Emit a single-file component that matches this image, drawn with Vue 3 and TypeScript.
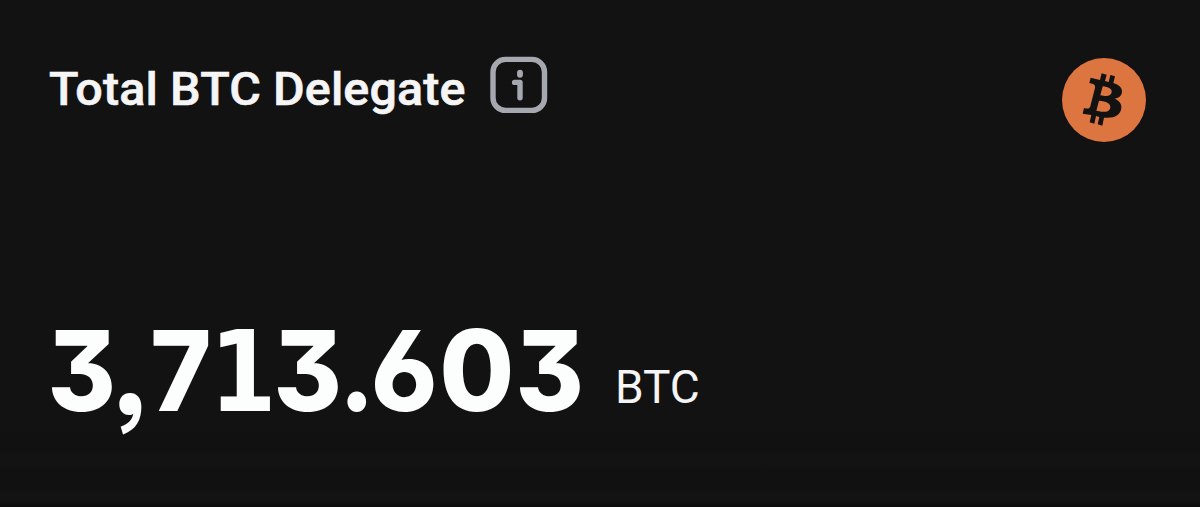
<script setup lang="ts">
interface Glyph { char: string; kind: string }

const amount = '3,713.603'
const kinds: Record<string, string> = {
  '3': 'three', ',': 'comma', '7': 'seven', '1': 'one', '.': 'dot', '6': 'six', '0': 'zero',
}
const glyphs: Glyph[] = [...amount].map((char) => ({ char, kind: kinds[char] }))
</script>

<template>
  <section class="card">
    <header class="head">
      <div class="heading">
        <h2 class="title">Total BTC Delegate</h2>
        <svg class="info" viewBox="0 0 58 58" fill="none">
          <rect x="3" y="3.4" width="51.5" height="51" rx="12.5" stroke="#a6a8b0" stroke-width="5.4" />
          <path d="M24.6 26.4H30V41.8" stroke="#a6a8b0" stroke-width="5.4" stroke-linecap="round" stroke-linejoin="round" />
          <path d="M30 16.6V18.8" stroke="#a6a8b0" stroke-width="5.8" stroke-linecap="round" />
        </svg>
      </div>
      <svg class="coin" viewBox="36 40 252 252">
        <circle cx="162" cy="166" r="126" fill="#dd7541" />
        <path
          fill="#121212" fill-rule="evenodd"
          d="M122 99L150 106L155 86L170 90L165 109L176 112L181 91L195 95L190 115C207 120 217 129 216 142C215 153 207 160 194 162C208 168 216 178 214 191C211 212 193 222 162 219L157 243L143 239L148 217L138 214L133 237L119 233L124 211L98 207L102 190C112 193 119 193 121 185L135 130C137 122 133 118 118 115ZM158 125L151 152L165 154C176 155 184 151 185 143C187 132 175 127 158 125ZM147 168L139 198L155 201C169 203 179 199 181 189C183 176 169 170 147 168Z"
        />
      </svg>
    </header>
    <div class="value">
      <div class="amount">
        <span v-for="(g, i) in glyphs" :key="i" class="cell" :class="g.kind"><span class="glyph">{{ g.char }}</span></span>
      </div>
      <span class="unit">BTC</span>
    </div>
  </section>
</template>

<style>
body { margin: 0; background: #121212; }
</style>

<style scoped>
.card {
  box-sizing: border-box;
  width: 1200px;
  height: 507px;
  padding: 56px 54px 0 50px;
  overflow: hidden;
  color: #f5f5f6;
  background: linear-gradient(#121212 0 430px, #111 434px 450px, #131313 456px 463px, #111 470px 488px, #131313 493px 501px, #0c0c0c 506px);
  font-family: Roboto, "Liberation Sans", sans-serif;
}
.head { display: flex; justify-content: space-between; height: 234px; }
.heading { display: flex; align-items: flex-start; height: 66px; }
.title {
  width: 441px;
  margin: 6px 0 0 -1.5px;
  font-size: 46px;
  line-height: 54px;
  font-weight: 500;
  letter-spacing: 0.1px;
  white-space: nowrap;
  transform: scaleX(1.054);
  transform-origin: left;
  -webkit-text-stroke: 0.6px #f5f5f6;
}
.info { width: 58px; height: 58px; }
.coin { width: 84px; height: 84px; margin-top: 2px; }
.value { display: flex; align-items: flex-start; margin-left: -3px; }
.amount {
  display: flex;
  color: #fcfdfd;
  font: 800 112px/160px Inter, sans-serif;
  font-feature-settings: "cv09" 1, "cv03" 1, "ss03" 1;
}
.cell { display: flex; justify-content: center; }
.glyph { display: block; }
.three { width: 69px; }
.three .glyph { transform: scaleX(0.93); }
.comma { width: 32.5px; }
.comma .glyph { transform: scaleY(1.1); transform-origin: 50% 88px; }
.seven { width: 64.5px; }
.seven .glyph { transform: scaleX(0.93); }
.one { width: 60.5px; font-family: "DejaVu Sans"; font-weight: 700; }
.one .glyph { transform: translateY(1.5px) scaleX(0.86); }
.dot { width: 28px; }
.dot .glyph { transform: scaleX(0.9); }
.six { width: 68px; }
.six .glyph { transform: scaleX(0.95); }
.zero { width: 76.5px; }
.zero .glyph { transform: scaleX(0.97); }
.unit { margin: 70px 0 0 31px; font-size: 46px; line-height: 54px; }
</style>
